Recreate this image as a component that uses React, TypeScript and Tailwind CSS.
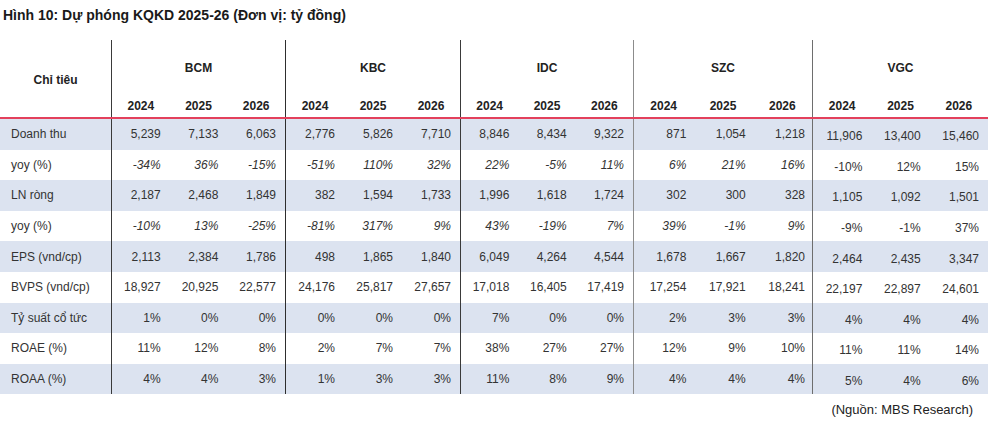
const groups = [
  { name: "BCM", width: "w-[174px]", line: "border-[#3a3a3a]" },
  { name: "KBC", width: "w-[175px]", line: "border-[#2e2e2e]" },
  { name: "IDC", width: "w-[173px]", line: "border-[#3a3a3a]" },
  { name: "SZC", width: "w-[179px]", line: "border-[#8c8c8c]" },
  { name: "VGC", width: "w-[176px]", line: "border-[#6e6e6e]" },
];

const rows: { label: string; italic?: boolean; values: string[][] }[] = [
  {
    label: "Doanh thu",
    values: [
      ["5,239", "7,133", "6,063"],
      ["2,776", "5,826", "7,710"],
      ["8,846", "8,434", "9,322"],
      ["871", "1,054", "1,218"],
      ["11,906", "13,400", "15,460"],
    ],
  },
  {
    label: "yoy (%)",
    italic: true,
    values: [
      ["-34%", "36%", "-15%"],
      ["-51%", "110%", "32%"],
      ["22%", "-5%", "11%"],
      ["6%", "21%", "16%"],
      ["-10%", "12%", "15%"],
    ],
  },
  {
    label: "LN ròng",
    values: [
      ["2,187", "2,468", "1,849"],
      ["382", "1,594", "1,733"],
      ["1,996", "1,618", "1,724"],
      ["302", "300", "328"],
      ["1,105", "1,092", "1,501"],
    ],
  },
  {
    label: "yoy (%)",
    italic: true,
    values: [
      ["-10%", "13%", "-25%"],
      ["-81%", "317%", "9%"],
      ["43%", "-19%", "7%"],
      ["39%", "-1%", "9%"],
      ["-9%", "-1%", "37%"],
    ],
  },
  {
    label: "EPS (vnd/cp)",
    values: [
      ["2,113", "2,384", "1,786"],
      ["498", "1,865", "1,840"],
      ["6,049", "4,264", "4,544"],
      ["1,678", "1,667", "1,820"],
      ["2,464", "2,435", "3,347"],
    ],
  },
  {
    label: "BVPS (vnd/cp)",
    values: [
      ["18,927", "20,925", "22,577"],
      ["24,176", "25,817", "27,657"],
      ["17,018", "16,405", "17,419"],
      ["17,254", "17,921", "18,241"],
      ["22,197", "22,897", "24,601"],
    ],
  },
  {
    label: "Tỷ suất cổ tức",
    values: [
      ["1%", "0%", "0%"],
      ["0%", "0%", "0%"],
      ["7%", "0%", "0%"],
      ["2%", "3%", "3%"],
      ["4%", "4%", "4%"],
    ],
  },
  {
    label: "ROAE (%)",
    values: [
      ["11%", "12%", "8%"],
      ["2%", "7%", "7%"],
      ["38%", "27%", "27%"],
      ["12%", "9%", "10%"],
      ["11%", "11%", "14%"],
    ],
  },
  {
    label: "ROAA (%)",
    values: [
      ["4%", "4%", "3%"],
      ["1%", "3%", "3%"],
      ["11%", "8%", "9%"],
      ["4%", "4%", "4%"],
      ["5%", "4%", "6%"],
    ],
  },
];

export default function App() {
  return (
    <div className="w-[989px] h-[422px] bg-white text-[#333] font-['Liberation_Sans',Arial,sans-serif] overflow-hidden">
      <div className="h-[40px] pl-[3px] pt-[6px] text-[14px] font-bold text-[#1a1a1a] leading-[18px]">
        Hình 10: Dự phóng KQKD 2025-26 (Đơn vị: tỷ đồng)
      </div>

      <div className="w-[988px] text-[12px]">
        {/* header */}
        <div className="flex h-[77px]">
          <div className="w-[111px] flex items-center justify-center font-bold text-[#222] pt-[3px]">
            Chỉ tiêu
          </div>
          {groups.map((g) => (
            <div key={g.name} className={`${g.width} border-l ${g.line} flex flex-col`}>
              <div className="h-[54px] flex items-center justify-center font-bold text-[#222] pt-[1px]">{g.name}</div>
              <div className="h-[23px] grid grid-cols-3 font-bold text-[#222]">
                {["2024", "2025", "2026"].map((y) => (
                  <div key={y} className="flex items-center justify-center">
                    {y}
                  </div>
                ))}
              </div>
            </div>
          ))}
        </div>

        <div className="h-[2px] bg-[#e3405c]" />

        {/* body */}
        {rows.map((r, i) => (
          <div key={i} className={`flex h-[30.6px] ${i % 2 === 0 ? "bg-[#dce3f0]" : "bg-white"}`}>
            <div className="w-[111px] flex items-center pl-[11px]">{r.label}</div>
            {groups.map((g, gi) => {
              const vgc = gi === 4;
              return (
                <div key={g.name} className={`${g.width} border-l ${g.line} grid grid-cols-3`}>
                  {r.values[gi].map((v, k) => (
                    <div
                      key={k}
                      className={`flex items-center justify-end ${gi === 3 ? "pr-[7px]" : "pr-[9px]"} ${
                        vgc ? "pt-[4px]" : ""
                      } ${r.italic && !vgc ? "italic" : ""}`}
                    >
                      {v}
                    </div>
                  ))}
                </div>
              );
            })}
          </div>
        ))}
      </div>

      <div className="flex justify-end pr-[16px] pt-[6px] text-[13px] text-[#222]">(Nguồn: MBS Research)</div>
    </div>
  );
}
